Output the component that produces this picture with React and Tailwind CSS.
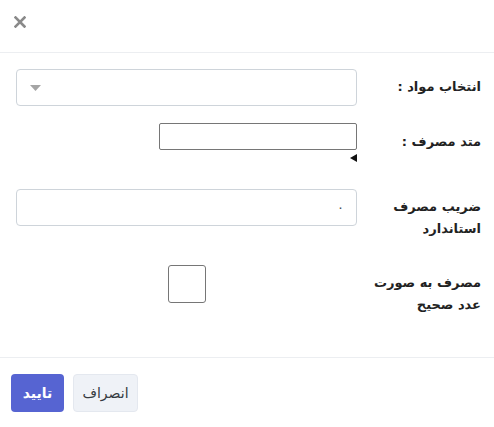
import React from "react";

const labelCls =
  "w-[111px] shrink-0 pt-[7px] text-[13px] leading-[22px] font-bold text-[#222] whitespace-nowrap";

const CloseIcon = () => (
  <svg width="12" height="12" viewBox="0 0 12 12" className="block">
    <path
      d="M1.5 1.5 L10.5 10.5 M10.5 1.5 L1.5 10.5"
      stroke="#8a8a8a"
      strokeWidth="2.6"
      strokeLinecap="square"
    />
  </svg>
);

export default function App() {
  return (
    <div
      dir="rtl"
      className="w-[494px] h-[427px] bg-white text-[#212529]"
      style={{ fontFamily: '"DejaVu Sans", "Noto Sans", sans-serif' }}
    >
      {/* header */}
      <div className="h-[53px] border-b border-[#eceef1] flex items-start justify-end pl-[14px] pt-[16px]">
        <CloseIcon />
      </div>

      {/* body */}
      <div className="pr-[13px] pl-[16px] pt-[16px] pb-[41px]">
        <div className="flex items-start gap-[13px] h-[37px]">
          <div className={labelCls}>انتخاب مواد :</div>
          <div className="flex-1 h-[37px] border border-[#ced4da] rounded-[4px] flex items-center justify-end pl-[13px]">
            <svg width="11" height="6" viewBox="0 0 11 6">
              <path d="M0 0 H11 L5.5 6 Z" fill="#a5a5a5" />
            </svg>
          </div>
        </div>

        <div className="flex items-start gap-[13px] mt-[17px] h-[39px]">
          <div className={labelCls + " pt-[8px]"}>متد مصرف :</div>
          <div className="flex-1 flex flex-col items-start">
            <div className="w-[198px] h-[27px] border border-[#767676] rounded-[2px]" />
            <svg width="7" height="8" viewBox="0 0 7 8" className="mt-[4px]">
              <path d="M7 0 V8 L0 4 Z" fill="#111" />
            </svg>
          </div>
        </div>

        <div className="flex items-start gap-[13px] mt-[27px] h-[51px]">
          <div className={labelCls}>
            ضریب مصرف
            <br />
            استاندارد
          </div>
          <div className="flex-1 h-[37px] border border-[#ced4da] rounded-[4px] flex items-center pr-[12px] text-[13px] text-[#495057]">
            ۰
          </div>
        </div>

        <div className="flex items-start gap-[13px] mt-[25px] h-[51px]">
          <div className={labelCls}>
            مصرف به صورت
            <br />
            عدد صحیح
          </div>
          <div className="flex-1 flex justify-center">
            <div className="w-[38px] h-[38px] border border-[#767676] rounded-[3px]" />
          </div>
        </div>
      </div>

      {/* footer */}
      <div className="border-t border-[#eceef1] flex justify-end gap-[9px] pl-[11px] pt-[16px]">
        <button className="w-[65px] h-[38px] rounded-[4px] bg-[#eff2f7] border border-[#e4e8ef] text-[14px] text-[#343a40]">
          انصراف
        </button>
        <button className="w-[53px] h-[38px] rounded-[4px] bg-[#5664d2] text-white text-[14px] font-bold">
          تایید
        </button>
      </div>
    </div>
  );
}
